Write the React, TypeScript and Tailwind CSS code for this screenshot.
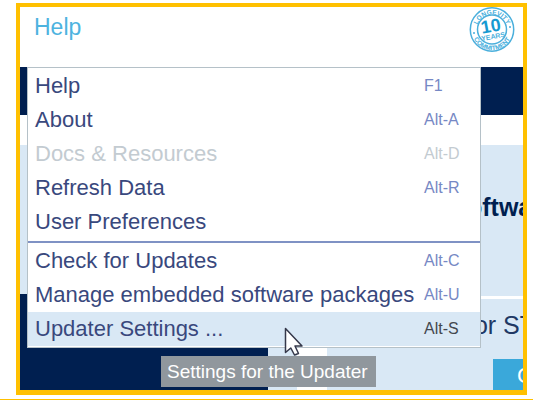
import React from "react";

type Entry = { label: string; keys?: string; state?: "disabled" | "active" };

const upper: Entry[] = [
  { label: "Help", keys: "F1" },
  { label: "About", keys: "Alt-A" },
  { label: "Docs & Resources", keys: "Alt-D", state: "disabled" },
  { label: "Refresh Data", keys: "Alt-R" },
  { label: "User Preferences" },
];

const lower: Entry[] = [
  { label: "Check for Updates", keys: "Alt-C" },
  { label: "Manage embedded software packages", keys: "Alt-U" },
  { label: "Updater Settings ...", keys: "Alt-S", state: "active" },
];

function MenuRow({ label, keys, state }: Entry) {
  const tone =
    state === "disabled"
      ? "text-[#c3cbd1]"
      : state === "active"
        ? "bg-[#d9e8f5] text-[#39487d]"
        : "text-[#39487d]";
  const keyTone =
    state === "disabled"
      ? "text-[#c3cbd1]"
      : state === "active"
        ? "text-[#43474f]"
        : "text-[#7688c4]";
  return (
    <button
      type="button"
      role="menuitem"
      disabled={state === "disabled"}
      className={`flex min-h-[34px] w-full items-center justify-between pr-5 pl-[7px] text-left text-[22px] leading-[34px] whitespace-nowrap ${tone}`}
    >
      <span>{label}</span>
      {keys && <span className={`w-9 shrink-0 text-[16px] ${keyTone}`}>{keys}</span>}
    </button>
  );
}

function Badge() {
  return (
    <svg viewBox="0 0 46 46" className="size-[46px]" role="img" aria-label="Longevity commitment, 10 years">
      <defs>
        <path id="arc-top" d="M7.500 23a15.500 15.500 0 0 1 31 0" />
        <path id="arc-bottom" d="M2.800 23a20.200 20.200 0 0 0 40.400 0" />
      </defs>
      <g fill="none" stroke="#4aafdc">
        <circle cx="23" cy="22.500" r="21.700" strokeWidth="1.500" />
        <circle cx="23" cy="22.500" r="14.500" strokeWidth="1.500" />
      </g>
      <g fill="#4aafdc" fontFamily="Liberation Sans, sans-serif" fontWeight="700" textAnchor="middle">
        <text fontSize="6.500"><textPath href="#arc-top" startOffset="50%">LONGEVITY</textPath></text>
        <text fontSize="6.500"><textPath href="#arc-bottom" startOffset="50%">COMMITMENT</textPath></text>
        <g transform="rotate(-10 23 23)">
          <text x="22.500" y="25" fontSize="18" fill="#1599d1">10</text>
          <text x="23" y="32" fontSize="7">YEARS</text>
        </g>
        <circle cx="5" cy="26" r="1" />
        <circle cx="41" cy="20" r="1" />
      </g>
    </svg>
  );
}

export default function App() {
  return (
    <main className="flex h-screen flex-col overflow-hidden border-b border-[#ffc000] bg-white pt-[3px] pr-1.5 pb-1 pl-4 font-['Liberation_Sans',Arial,sans-serif]">
      <div className="relative flex flex-1 flex-col overflow-hidden border-4 border-b-[5px] border-[#ffc000] bg-white pb-px">
        <header className="flex h-[60px] shrink-0 items-start justify-between pr-2 pl-3.5">
          <a href="#help" className="pt-1 text-[23px] leading-8 text-[#4db3df]">Help</a>
          <Badge />
        </header>
        <div className="h-12 shrink-0 bg-[#001f50]" />
        <div className="h-[30px] shrink-0" />
        <section className="flex h-[151px] shrink-0 justify-end bg-[#d9e8f5] pt-12">
          <h2 className="w-14 text-[25px] leading-7 font-bold whitespace-nowrap text-[#001f50]">oftware</h2>
        </section>
        <div className="h-[3px] shrink-0 bg-white" />
        <section className="flex flex-1">
          <div className="-mt-[5px] w-[248px] bg-[#001f50]" />
          <div className="w-[29px] bg-[#d9e8f5]" />
          <div className="w-[30px] bg-white" />
          <div className="flex flex-1 flex-col items-end bg-[#d9e8f5] pt-3">
            <h2 className="w-14 text-[25px] leading-7 whitespace-nowrap text-[#203864]">for ST</h2>
            <button type="button" className="mt-5 w-[30px] flex-1 overflow-hidden bg-[#3aa8da] pl-6 text-left text-[22px] text-white">C</button>
          </div>
        </section>

        <div role="menu" className="absolute top-[60px] right-[42px] left-[7px] border border-[#b5c1c8] bg-white py-px">
          {upper.map((e) => <MenuRow key={e.label} {...e} />)}
          <hr className="mt-0.5 mb-px border-t-2 border-[#7f92c4]" />
          {lower.map((e) => <MenuRow key={e.label} {...e} />)}
        </div>

        <div role="tooltip" className="absolute top-[349px] left-[141px] bg-[#90979d] pr-2 pl-1.5 text-[19px] leading-[31px] whitespace-nowrap text-white">
          Settings for the Updater
        </div>
        <svg viewBox="0 0 19 29" className="absolute top-[320px] left-[264px] h-[29px] w-[19px]" aria-hidden="true">
          <path d="M1.500 1.500V25.500l5.300-4.500 3.700 7 4-1.500-3.500-7.500h7z" fill="#fff" stroke="#35384a" strokeWidth="1.500" strokeLinejoin="round" />
        </svg>
      </div>
    </main>
  );
}
